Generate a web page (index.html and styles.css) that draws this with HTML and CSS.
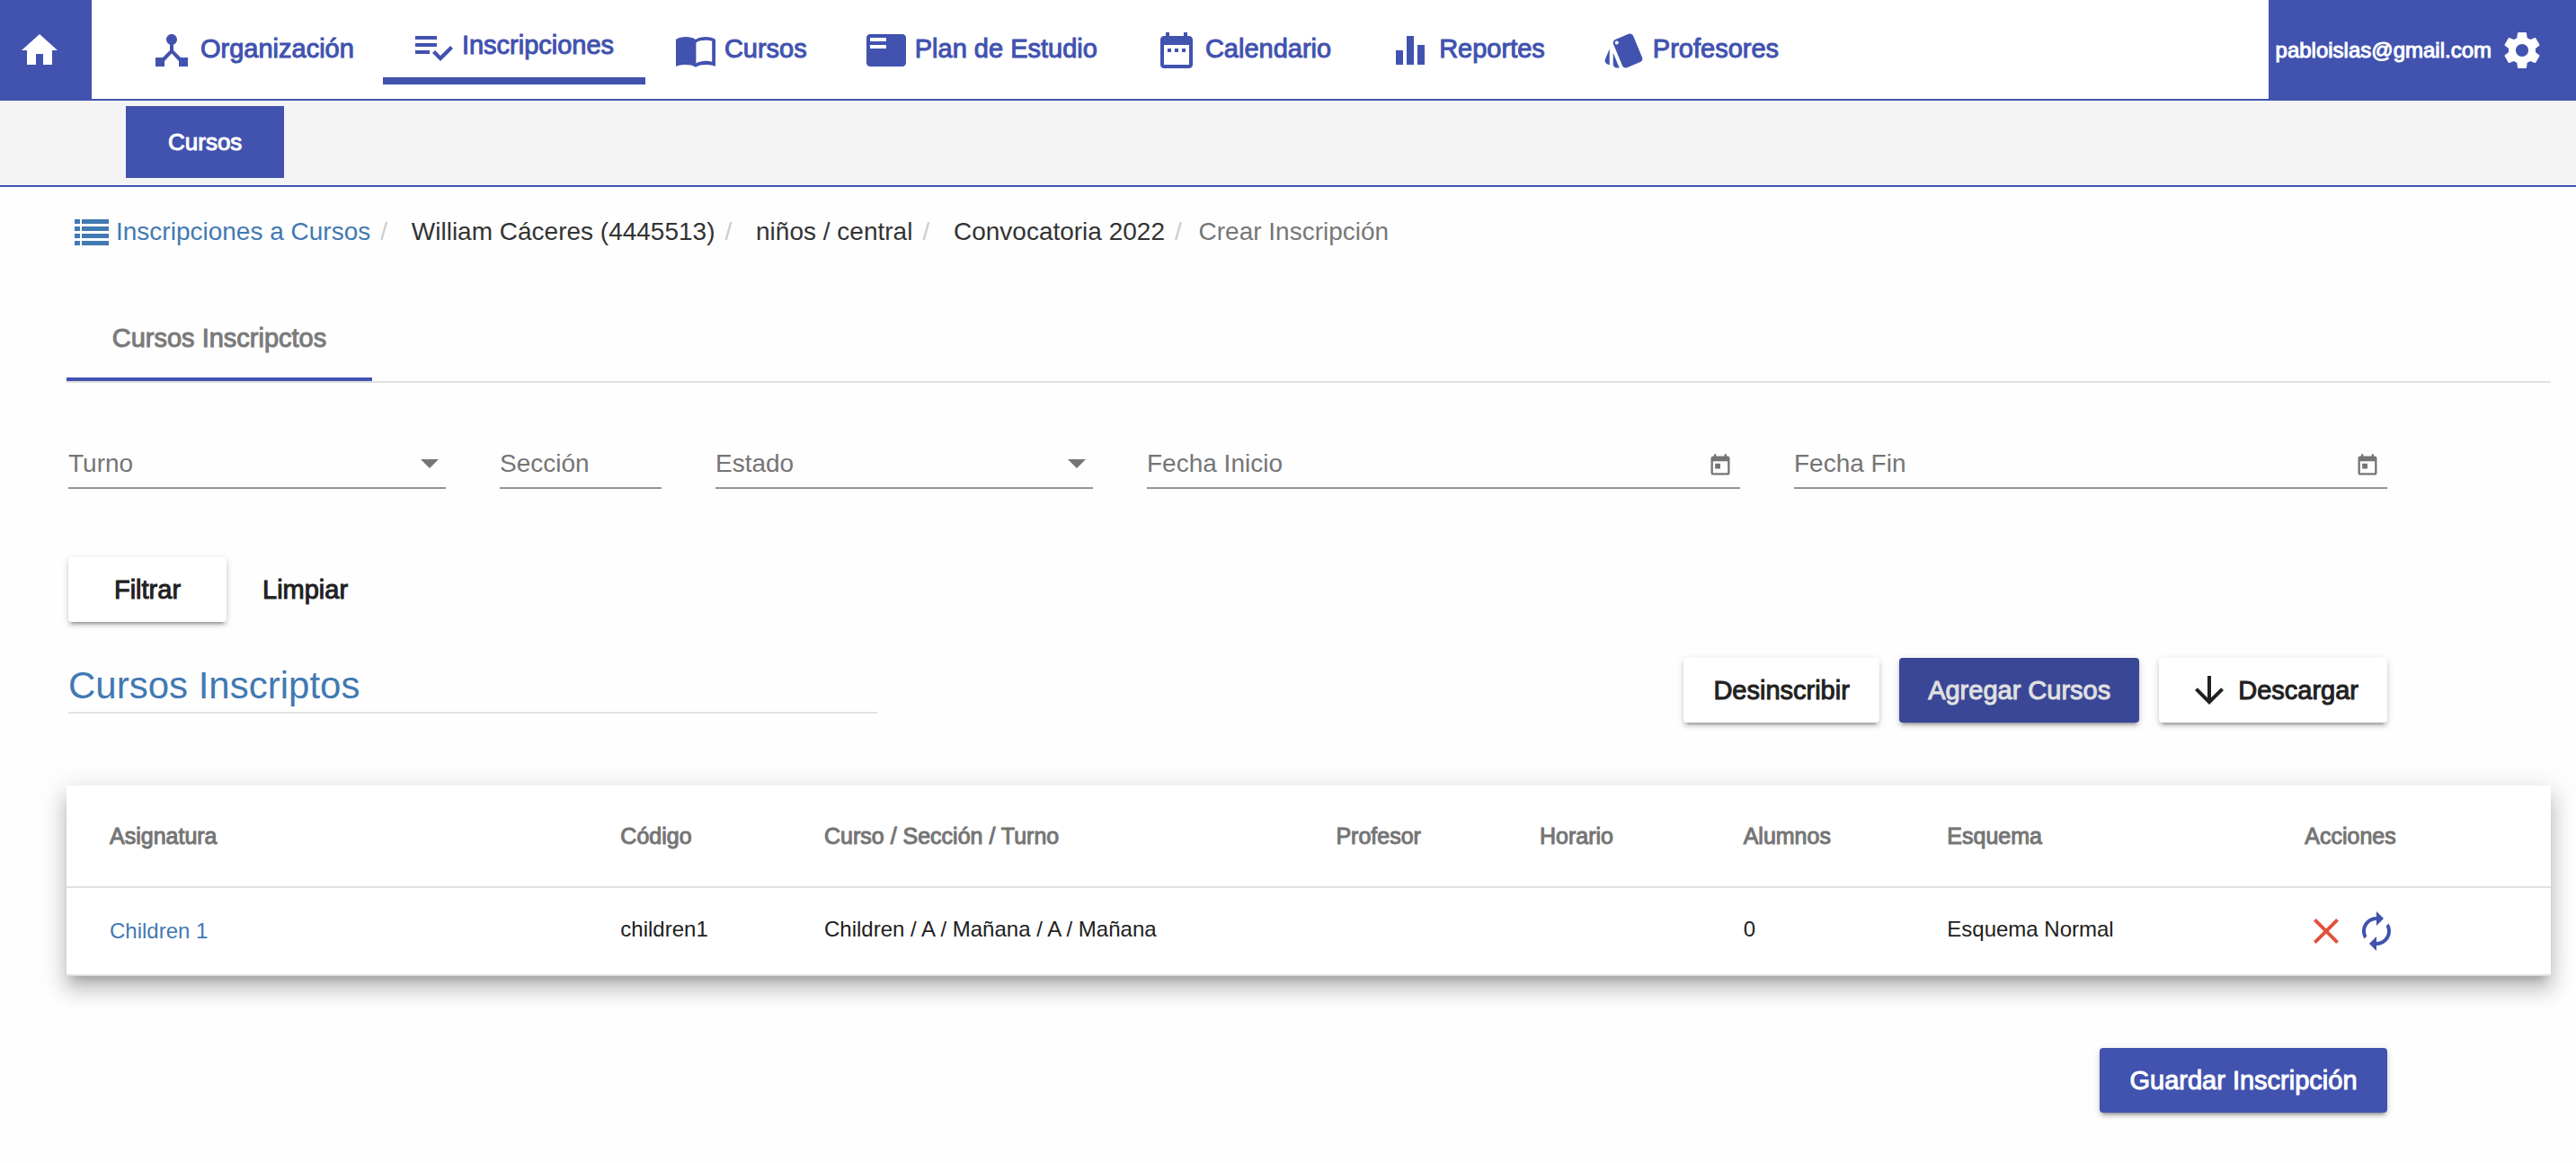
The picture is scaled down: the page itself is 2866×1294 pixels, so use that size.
FILE: index.html
```html
<!DOCTYPE html>
<html lang="es">
<head>
<meta charset="utf-8">
<meta name="viewport" content="width=device-width, initial-scale=1">
<title>Crear Inscripción</title>
<link rel="stylesheet" href="styles.css">
</head>
<body>
<header class="topbar">
  <a class="home" href="#" aria-label="Inicio"><svg class="icon" viewBox="0 0 24 24"><path d="M10 20v-6h4v6h5v-8h3L12 3 2 12h3v8z"/></svg></a>
  <nav class="nav">
    <a class="nav-item" href="#"><svg class="icon" viewBox="0 0 24 24"><path d="M17 16l-4-4V8.820C14.160 8.400 15 7.300 15 6c0-1.660-1.340-3-3-3S9 4.340 9 6c0 1.300.840 2.400 2 2.820V12l-4 4H3v5h5v-3.050l4-4.200 4 4.200V21h5v-5h-4z"/></svg><span class="nav-text">Organización</span></a>
    <a class="nav-item active" href="#"><svg class="icon" viewBox="0 0 24 24"><path d="M14 10H2v2h12v-2zm0-4H2v2h12V6zM2 16h8v-2H2v2zm19.500-4.500L23 13l-6.990 7-4.510-4.500L13 14l3.010 3 5.490-5.500z"/></svg><span class="nav-text">Inscripciones</span></a>
    <a class="nav-item" href="#"><svg class="icon" viewBox="0 0 24 24"><path fill-rule="evenodd" d="M12 6C10.550 4.900 8.450 4.500 6.500 4.500S2.450 4.900 1 6v15c1.300-.700 3.400-1 5.500-1s4.100.300 5.500 1.400c1.400-1.100 3.400-1.400 5.500-1.400s4.200.300 5.500 1V6c-1.450-1.100-3.550-1.500-5.500-1.500S13.450 4.900 12 6zm.200 1.700c1.400-1 3.400-1.300 5.300-1.300 1.200 0 2.500.100 3.600.500v11.500c-1.100-.350-2.300-.500-3.500-.500-1.900 0-4 .400-5.400 1.400z"/></svg><span class="nav-text">Cursos</span></a>
    <a class="nav-item" href="#"><svg class="icon" viewBox="0 0 24 24"><path d="M21 3H3c-1.100 0-2 .900-2 2v14c0 1.100.900 2 2 2h18c1.100 0 2-.900 2-2V5c0-1.100-.900-2-2-2zm-9 8H3V9h9v2zm0-4H3V5h9v2z"/></svg><span class="nav-text">Plan de Estudio</span></a>
    <a class="nav-item" href="#"><svg class="icon" viewBox="0 0 24 24"><path d="M9 11H7v2h2v-2zm4 0h-2v2h2v-2zm4 0h-2v2h2v-2zm2-7h-1V2h-2v2H8V2H6v2H5c-1.110 0-1.990.900-1.990 2L3 20c0 1.100.890 2 2 2h14c1.100 0 2-.900 2-2V6c0-1.100-.900-2-2-2zm0 16H5V9h14v11z"/></svg><span class="nav-text">Calendario</span></a>
    <a class="nav-item" href="#"><svg class="icon" viewBox="0 0 24 24"><path d="M10 20h4V4h-4v16zm-6 0h4v-8H4v8zM16 9v11h4V9h-4z"/></svg><span class="nav-text">Reportes</span></a>
    <a class="nav-item" href="#"><svg class="icon" viewBox="0 0 24 24"><path d="M2.530 19.650l1.340.560v-9.030l-2.430 5.860c-.410 1.020.080 2.190 1.090 2.610zm19.500-3.700L17.070 3.980c-.310-.750-1.040-1.210-1.810-1.230-.260 0-.530.040-.790.150L7.100 5.950c-.750.310-1.210 1.030-1.230 1.800-.010.270.040.540.150.800l4.960 11.970c.310.760 1.050 1.220 1.830 1.230.260 0 .520-.050.770-.150l7.360-3.050c1.020-.420 1.510-1.590 1.090-2.600zM7.880 8.750c-.550 0-1-.450-1-1s.450-1 1-1 1 .450 1 1-.450 1-1 1zm-2 11c0 1.100.900 2 2 2h1.450l-3.450-8.340v6.340z"/></svg><span class="nav-text">Profesores</span></a>
  </nav>
  <button class="user" type="button"><span>pabloislas@gmail.com</span><svg class="icon" viewBox="0 0 24 24"><path d="M19.430 12.980c.040-.320.070-.640.070-.980s-.030-.660-.070-.980l2.110-1.650c.190-.150.240-.420.120-.640l-2-3.460c-.120-.220-.390-.300-.610-.220l-2.490 1c-.520-.400-1.080-.730-1.690-.980l-.380-2.650C14.460 2.180 14.250 2 14 2h-4c-.250 0-.460.180-.490.420l-.380 2.650c-.610.250-1.170.590-1.690.980l-2.490-1c-.230-.090-.490 0-.610.220l-2 3.460c-.130.220-.070.490.120.640l2.110 1.650c-.040.320-.070.650-.070.980s.030.660.070.980l-2.110 1.650c-.190.150-.240.420-.120.640l2 3.460c.120.220.390.300.610.220l2.490-1c.520.400 1.080.730 1.690.980l.380 2.650c.030.240.240.420.490.420h4c.250 0 .460-.180.490-.420l.380-2.650c.610-.250 1.170-.590 1.690-.980l2.490 1c.230.090.490 0 .610-.220l2-3.460c.120-.220.070-.490-.120-.640l-2.110-1.650zM12 15.500c-1.930 0-3.500-1.570-3.500-3.500s1.570-3.500 3.500-3.500 3.500 1.570 3.500 3.500-1.570 3.500-3.500 3.500z"/></svg></button>
</header>
<nav class="subnav"><a class="subnav-item" href="#">Cursos</a></nav>

<main class="page">
  <ol class="breadcrumb">
    <li><a href="#"><svg class="list-icon" viewBox="0 0 38 30"><path d="M0 1h6v5H0zM8 1h30v5H8zM0 9h6v5H0zM8 9h30v5H8zM0 17h6v5H0zM8 17h30v5H8zM0 25h6v5H0zM8 25h30v5H8z"/></svg>Inscripciones a Cursos</a></li>
    <li class="step">William Cáceres (4445513)</li>
    <li class="step">niños / central</li>
    <li class="step">Convocatoria 2022</li>
    <li class="current">Crear Inscripción</li>
  </ol>

  <div class="tabs" role="tablist">
    <button class="tab" type="button" role="tab" aria-selected="true">Cursos Inscripctos</button>
  </div>

  <div class="content">
    <form class="filters">
      <div class="fields">
        <div class="field">
          <select aria-label="Turno"><option>Turno</option></select>
          <svg class="caret" viewBox="0 0 20 10"><path d="M0 0h20L10 10z"/></svg>
        </div>
        <div class="field"><input type="text" placeholder="Sección" aria-label="Sección"></div>
        <div class="field">
          <select aria-label="Estado"><option>Estado</option></select>
          <svg class="caret" viewBox="0 0 20 10"><path d="M0 0h20L10 10z"/></svg>
        </div>
        <div class="field">
          <input type="text" placeholder="Fecha Inicio" aria-label="Fecha Inicio">
          <button class="picker" type="button" aria-label="Abrir calendario"><svg viewBox="0 0 24 24"><path d="M19 3h-1V1h-2v2H8V1H6v2H5c-1.110 0-1.990.900-1.990 2L3 19c0 1.100.890 2 2 2h14c1.100 0 2-.900 2-2V5c0-1.100-.900-2-2-2zm0 16H5V8h14v11zM7 10h5v5H7z"/></svg></button>
        </div>
        <div class="field">
          <input type="text" placeholder="Fecha Fin" aria-label="Fecha Fin">
          <button class="picker" type="button" aria-label="Abrir calendario"><svg viewBox="0 0 24 24"><path d="M19 3h-1V1h-2v2H8V1H6v2H5c-1.110 0-1.990.900-1.990 2L3 19c0 1.100.890 2 2 2h14c1.100 0 2-.900 2-2V5c0-1.100-.900-2-2-2zm0 16H5V8h14v11zM7 10h5v5H7z"/></svg></button>
        </div>
      </div>
      <div class="filter-actions">
        <button class="btn btn-filter" type="submit">Filtrar</button>
        <button class="btn btn-flat" type="reset">Limpiar</button>
      </div>
    </form>

    <div class="section-head">
      <h2>Cursos Inscriptos</h2>
      <div class="section-actions">
        <button class="btn" type="button">Desinscribir</button>
        <button class="btn btn-dark" type="button">Agregar Cursos</button>
        <button class="btn" type="button"><svg class="icon" viewBox="0 0 24 24"><path d="M20 12l-1.410-1.410L13 16.170V4h-2v12.170l-5.580-5.590L4 12l8 8 8-8z"/></svg>Descargar</button>
      </div>
    </div>
  </div>

  <table class="courses">
    <colgroup><col class="c-name"><col class="c-s"><col class="c-course"><col class="c-s"><col class="c-s"><col class="c-s"><col class="c-scheme"><col></colgroup>
    <thead>
      <tr><th>Asignatura</th><th>Código</th><th>Curso / Sección / Turno</th><th>Profesor</th><th>Horario</th><th>Alumnos</th><th>Esquema</th><th>Acciones</th></tr>
    </thead>
    <tbody>
      <tr>
        <td class="middle"><a href="#">Children 1</a></td><td>children1</td><td>Children / A / Mañana / A / Mañana</td><td></td><td></td><td>0</td><td>Esquema Normal</td>
        <td class="middle"><div class="row-actions">
          <button class="act remove" type="button" aria-label="Eliminar"><svg class="icon" viewBox="0 0 24 24"><path d="M19 6.410L17.590 5 12 10.590 6.410 5 5 6.410 10.590 12 5 17.590 6.410 19 12 13.410 17.590 19 19 17.590 13.410 12z"/></svg></button>
          <button class="act" type="button" aria-label="Cambiar"><svg class="icon" viewBox="0 0 24 24"><path d="M12 6v3l4-4-4-4v3c-4.420 0-8 3.580-8 8 0 1.570.460 3.030 1.240 4.260L6.700 14.800c-.450-.830-.700-1.790-.700-2.800 0-3.310 2.690-6 6-6zm6.760 1.740L17.300 9.200c.440.840.700 1.790.700 2.800 0 3.310-2.690 6-6 6v-3l-4 4 4 4v-3c4.420 0 8-3.580 8-8 0-1.570-.460-3.030-1.240-4.260z"/></svg></button>
        </div></td>
      </tr>
    </tbody>
  </table>

  <div class="save"><button class="btn btn-primary" type="button">Guardar Inscripción</button></div>
</main>
</body>
</html>
```
FILE: styles.css
```css
:root {
  --primary: #4152af;
  --primary-dark: #3a4797;
  --link: #4279b2;
  --muted: #757575;
  --text: #212121;
  --line: #e0e0e0;
}

* { box-sizing: border-box; }

body {
  margin: 0;
  background: #fefefe;
  color: var(--text);
  font: 28px/40px "Liberation Sans", Arial, sans-serif;
}

a { color: inherit; text-decoration: none; }

button, input, select {
  margin: 0;
  padding: 0;
  border: 0;
  background: none;
  color: inherit;
  font: inherit;
}

svg { display: block; fill: currentColor; flex: none; }

.icon { width: 48px; height: 48px; }

/* medium weight, between the regular and bold faces */
.nav-text, .user, .subnav-item, .tab, .btn, .courses th {
  -webkit-text-stroke: 1px currentColor;
}

.topbar {
  display: flex;
  min-height: 112px;
  background: #fff;
  color: var(--primary);
  box-shadow: inset 0 -2px var(--primary);
}

.home, .user {
  display: flex;
  align-items: center;
  background: var(--primary);
  color: #fff;
}

.home { padding: 0 34px 0 20px; }

.user {
  gap: 10px;
  margin-left: auto;
  padding: 0 36px 0 8px;
  font-size: 24px;
}

.nav { display: flex; align-items: center; padding-left: 33px; }

.nav-item {
  display: flex;
  align-items: center;
  gap: 8px;
  padding: 10px 32px;
  font-size: 29px;
}

.nav-item.active {
  min-width: 292px;
  border-bottom: 8px solid var(--primary);
}

.nav-text { padding-bottom: 4px; }

.subnav {
  display: flex;
  padding: 6px 140px 8px;
  background: #f4f4f4;
  border-bottom: 2px solid var(--primary);
}

.subnav-item {
  padding: 20px 47px;
  background: var(--primary);
  color: #fff;
  font-size: 26px;
}

.page { padding: 30px 28px 56px 74px; }

.breadcrumb {
  display: flex;
  margin: 0;
  padding: 0 0 0 9px;
  list-style: none;
  color: #333;
}

.breadcrumb a {
  display: flex;
  align-items: center;
  gap: 8px;
  color: var(--link);
}

.breadcrumb li { display: flex; }

.list-icon { width: 38px; height: 30px; }

.breadcrumb li + li::before {
  content: "/\00a0";
  padding: 0 11px;
  color: #ccc;
}

.breadcrumb .step::before { margin-right: 8px; }

.breadcrumb .current { color: #777; }

.tabs {
  display: flex;
  margin-top: 54px;
  border-bottom: 2px solid var(--line);
}

.tab {
  min-width: 340px;
  padding: 24px 48px;
  border-bottom: 4px solid var(--primary);
  color: #7a7a7a;
  font-size: 29px;
}

.content { padding: 70px 182px 0 2px; }

.fields {
  display: grid;
  grid-template-columns: 7fr 3fr 7fr 11fr 11fr;
  gap: 60px;
}

.field {
  display: grid;
  grid-template-columns: minmax(0, 1fr);
  align-items: center;
  padding-bottom: 6px;
  border-bottom: 2px solid #949494;
  color: var(--muted);
}

.field > * { grid-area: 1 / 1; }

.field input, .field select {
  width: 100%;
  height: 40px;
  appearance: none;
  outline: 0;
}

.field input::placeholder { color: var(--muted); opacity: 1; }

.caret {
  justify-self: end;
  width: 20px;
  height: 10px;
  margin-right: 8px;
  pointer-events: none;
}

.picker { justify-self: end; padding: 4px 8px 0 0; }

.picker svg { width: 28px; height: 28px; }

.filter-actions { display: flex; gap: 8px; margin-top: 76px; }

.btn {
  display: flex;
  align-items: center;
  justify-content: center;
  gap: 8px;
  height: 72px;
  padding: 0 32px;
  border-radius: 4px;
  background: #fff;
  font-size: 29px;
  white-space: nowrap;
  box-shadow: 0 6px 2px -4px rgba(0, 0, 0, .2), 0 4px 4px rgba(0, 0, 0, .14), 0 2px 10px rgba(0, 0, 0, .12);
}

.btn-filter { min-width: 176px; }

.btn-flat { background: none; box-shadow: none; }

.btn-dark { background: var(--primary-dark); color: #e0e0e0; }

.btn-primary {
  min-width: 320px;
  background: var(--primary);
  color: #fff;
}

.section-head {
  display: flex;
  align-items: flex-start;
  justify-content: space-between;
  margin-top: 40px;
}

.section-head h2 {
  width: 34.9%;
  margin: 6px 0 0;
  padding-bottom: 4px;
  border-bottom: 2px solid #e3e3e3;
  color: var(--link);
  font-size: 42px;
  font-weight: 400;
  line-height: 50px;
}

.section-actions { display: flex; gap: 22px; }

.section-actions .btn { min-width: 218px; }

.courses {
  width: 100%;
  margin-top: 70px;
  table-layout: fixed;
  border-collapse: separate;
  border-spacing: 0;
  background: #fff;
  font-size: 24px;
  box-shadow: 0 10px 10px -6px rgba(0, 0, 0, .2), 0 16px 20px 2px rgba(0, 0, 0, .14), 0 6px 28px 4px rgba(0, 0, 0, .12);
}

.c-name { width: 22.3%; }
.c-s { width: 8.2%; }
.c-course { width: 20.6%; }
.c-scheme { width: 14.4%; }

.courses th, .courses td {
  padding: 0;
  border-bottom: 2px solid var(--line);
  text-align: left;
  white-space: nowrap;
}

.courses th {
  height: 114px;
  color: var(--muted);
  font-size: 25px;
  font-weight: 400;
}

.courses td { height: 98px; padding-bottom: 4px; }

.courses td.middle { padding-bottom: 0; }

.courses th:first-child, .courses td:first-child { padding-left: 48px; }

.courses td a { color: var(--link); }

.row-actions { display: flex; gap: 8px; }

.act { color: var(--primary); }

.act.remove { color: #e0523d; }

.save {
  display: flex;
  justify-content: flex-end;
  margin-top: 80px;
  padding-right: 182px;
}
```
